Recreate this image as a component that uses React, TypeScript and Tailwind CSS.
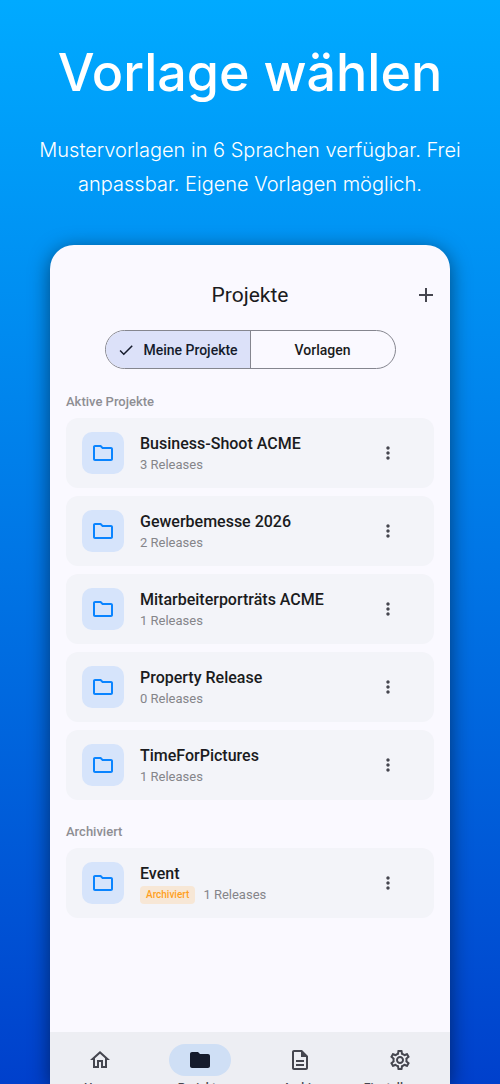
import {
  MdAdd,
  MdCheck,
  MdFolder,
  MdMoreVert,
  MdOutlineDescription,
  MdOutlineFolder,
  MdOutlineHome,
  MdOutlineSettings,
} from "react-icons/md";

interface Project {
  name: string;
  releases: number;
  archived?: boolean;
}

const activeProjects: Project[] = [
  { name: "Business-Shoot ACME", releases: 3 },
  { name: "Gewerbemesse 2026", releases: 2 },
  { name: "Mitarbeiterporträts ACME", releases: 1 },
  { name: "Property Release", releases: 0 },
  { name: "TimeForPictures", releases: 1 },
];

const archivedProjects: Project[] = [
  { name: "Event", releases: 1, archived: true },
];

const navItems = [
  { label: "Home", icon: MdOutlineHome, active: false },
  { label: "Projekte", icon: MdFolder, active: true },
  { label: "Archiv", icon: MdOutlineDescription, active: false },
  { label: "Einstellungen", icon: MdOutlineSettings, active: false },
];

function ProjectCard({ project }: { project: Project }) {
  return (
    <li className="flex h-[70px] items-center rounded-xl bg-[#f3f4f9] pl-4 pr-9">
      <div className="flex size-[42px] shrink-0 items-center justify-center rounded-[10px] bg-[#d6e4fb] text-[#0a84ff]">
        <MdOutlineFolder className="size-6" />
      </div>
      <div className="ml-4 flex-1 pt-[2px]">
        <h3 className="text-base leading-5 font-medium text-[#1a1b20]">
          {project.name}
        </h3>
        <div className="mt-[2px] flex items-center gap-2">
          {project.archived && (
            <span className="rounded bg-[#f7e7d6] px-1.5 text-[10px] leading-[18px] font-medium text-[#ff9f1c]">
              Archiviert
            </span>
          )}
          <span className="text-[13px] leading-[18px] text-[#85858a]">
            {project.releases} Releases
          </span>
        </div>
      </div>
      <button
        aria-label={`Menü für ${project.name}`}
        className="text-[#45464f]"
      >
        <MdMoreVert className="size-5" />
      </button>
    </li>
  );
}

function ProjectList({
  title,
  projects,
}: {
  title: string;
  projects: Project[];
}) {
  return (
    <section>
      <h2 className="text-[13px] leading-4 font-medium text-[#8e8e93]">
        {title}
      </h2>
      <ul className="mt-2 flex flex-col gap-2">
        {projects.map((project) => (
          <ProjectCard key={project.name} project={project} />
        ))}
      </ul>
    </section>
  );
}

export default function App() {
  return (
    <div className="flex h-screen flex-col overflow-hidden bg-linear-to-b from-[#00aaff] to-[#0040cc]">
      {/* Headline */}
      <header className="px-6 pt-[37px] text-center font-['Inter',sans-serif] text-white">
        <h1 className="text-[52px] leading-[72px] font-medium">
          Vorlage wählen
        </h1>
        <p className="mt-6 text-xl leading-[34px] font-light">
          Mustervorlagen in 6 Sprachen verfügbar. Frei anpassbar. Eigene
          Vorlagen möglich.
        </p>
      </header>

      {/* Phone screen */}
      <div className="mx-[50px] mt-11 flex min-h-0 flex-1 flex-col overflow-hidden rounded-t-3xl bg-[#faf9ff] font-['Roboto',sans-serif] shadow-[0_4px_20px_rgba(0,0,0,0.5)]">
        <main className="flex-1 px-4">
          <div className="grid grid-cols-[1fr_auto_1fr] items-center pt-9">
            <h2 className="col-start-2 text-[21px] leading-7 text-[#1a1b20]">
              Projekte
            </h2>
            <button
              aria-label="Projekt hinzufügen"
              className="-mr-1 justify-self-end text-[#45464f]"
            >
              <MdAdd className="size-6" />
            </button>
          </div>

          {/* Segmented control */}
          <div className="mx-auto mt-[21px] flex h-[39px] w-[291px] overflow-hidden rounded-full border border-[#85868f] text-sm font-medium">
            <button
              aria-pressed="true"
              className="flex flex-1 items-center justify-center gap-2 border-r border-[#85868f] bg-[#dce1f9] text-[#151b2c]"
            >
              <MdCheck className="size-[18px]" />
              Meine Projekte
            </button>
            <button aria-pressed="false" className="flex-1 text-[#1a1b20]">
              Vorlagen
            </button>
          </div>

          <div className="mt-[25px] flex flex-col gap-6">
            <ProjectList title="Aktive Projekte" projects={activeProjects} />
            <ProjectList title="Archiviert" projects={archivedProjects} />
          </div>
        </main>

        {/* Bottom navigation, cut off by the lower edge */}
        <nav className="grid h-[52px] shrink-0 grid-cols-4 overflow-hidden bg-[#edeef3] pt-3">
          {navItems.map(({ label, icon: Icon, active }) => (
            <button
              key={label}
              className="flex flex-col items-center gap-1 text-xs leading-4 font-medium text-[#45464f]"
            >
              <span
                className={
                  active
                    ? "flex h-8 w-[62px] items-center justify-center rounded-full bg-[#cfdff5] text-[#151b2c]"
                    : "flex h-8 w-[62px] items-center justify-center rounded-full"
                }
              >
                <Icon className="size-6" />
              </span>
              {label}
            </button>
          ))}
        </nav>
      </div>
    </div>
  );
}
